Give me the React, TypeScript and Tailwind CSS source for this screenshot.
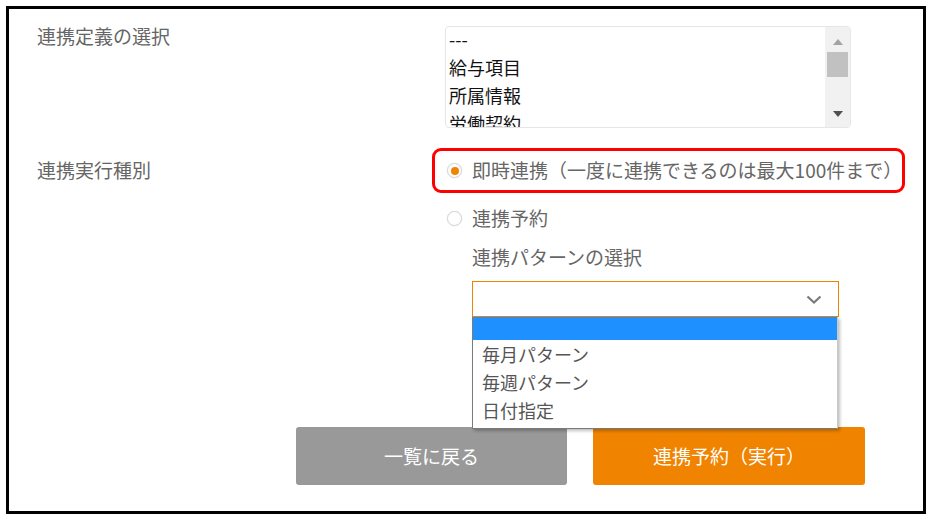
import React from "react";

const font = { fontFamily: '"Noto Sans CJK JP", "Noto Sans", sans-serif' };

const listItems = ["---", "給与項目", "所属情報", "労働契約"];
const patternOptions = ["毎月パターン", "毎週パターン", "日付指定"];

function ListBox() {
  return (
    <div className="relative w-[406px] h-[102px] border border-[#e6e6e6] rounded-[4px] overflow-hidden bg-white">
      <div className="pl-[3px] pr-[26px] -mt-[2px]">
        {listItems.map((item) => (
          <div key={item} className="h-[28px] leading-[28px] text-[18px] text-[#111]">
            {item}
          </div>
        ))}
      </div>
      {/* scrollbar */}
      <div className="absolute top-0 right-0 w-[25px] h-full bg-[#f1f1f1] flex flex-col items-center">
        <svg width="12" height="8" viewBox="0 0 12 8" className="mt-[11px]">
          <path d="M1 7 L6 1 L11 7 Z" fill="#a3a3a3" />
        </svg>
        <div className="mt-[6px] w-[21px] h-[25px] bg-[#c1c1c1]" />
        <svg width="12" height="8" viewBox="0 0 12 8" className="mt-auto mb-[9px]">
          <path d="M1 1 L6 7 L11 1 Z" fill="#505050" />
        </svg>
      </div>
    </div>
  );
}

function Radio({ checked }: { checked?: boolean }) {
  return (
    <span className="w-[15px] h-[15px] rounded-full border border-[#d6d6d6] bg-white shadow-[0_0_1px_rgba(0,0,0,0.15)] flex items-center justify-center shrink-0">
      {checked && <span className="w-[8px] h-[8px] rounded-full bg-[#f08300]" />}
    </span>
  );
}

export default function App() {
  return (
    <div className="w-[934px] h-[521px] bg-white p-[6px]" style={font}>
      <div className="w-[920px] h-[508px] border-[3px] border-black pt-[17px] pl-[28px]">
        {/* row 1 */}
        <div className="flex">
          <div className="w-[408px] text-[19px] leading-[20px] text-[#666]">連携定義の選択</div>
          <ListBox />
        </div>

        {/* row 2 */}
        <div className="flex mt-[20px]">
          <div className="w-[408px] pt-[12px] text-[19px] leading-[20px] text-[#666]">連携実行種別</div>
          <div className="flex flex-col">
            <div className="-ml-[13px] w-[473px] h-[45px] border-[3px] border-[#ff0000] rounded-[9px] flex items-center pl-[12px] gap-[10px]">
              <Radio checked />
              <span className="text-[19px] text-[#666] whitespace-nowrap">即時連携（一度に連携できるのは最大100件まで）</span>
            </div>
            <div className="flex items-center gap-[10px] h-[28px] mt-[11px] pl-[2px]">
              <Radio />
              <span className="text-[19px] text-[#666]">連携予約</span>
            </div>
            <div className="pl-[27px] mt-[11px] text-[19px] leading-[28px] text-[#666]">連携パターンの選択</div>
            <div className="relative ml-[27px] mt-[10px] w-[367px]">
              <div className="h-[36px] border border-[#f08300] bg-white flex items-center justify-end pr-[16px]">
                <svg width="16" height="9" viewBox="0 0 16 9">
                  <path d="M1.5 1.5 L8 7.5 L14.5 1.5" fill="none" stroke="#7a7a7a" strokeWidth="2.2" />
                </svg>
              </div>
              {/* open dropdown */}
              <div className="absolute left-0 top-[36px] w-[366px] bg-white border-l border-b border-r border-[#7a7a7a] border-r-[#c8c8c8] shadow-[2px_2px_3px_rgba(0,0,0,0.25)] pb-[4px] z-10">
                <div className="h-[23px] bg-[#1e90ff]" />
                {patternOptions.map((opt) => (
                  <div key={opt} className="h-[28px] leading-[28px] pl-[9px] text-[18px] text-[#555]">
                    {opt}
                  </div>
                ))}
              </div>
            </div>
          </div>
        </div>

        {/* buttons */}
        <div className="flex gap-[26px] ml-[259px] mt-[110px]">
          <button className="w-[271px] h-[58px] rounded-[3px] bg-[#999999] text-white text-[19px]">一覧に戻る</button>
          <button className="w-[272px] h-[58px] rounded-[3px] bg-[#f08300] text-white text-[19px]">連携予約（実行）</button>
        </div>
      </div>
    </div>
  );
}
